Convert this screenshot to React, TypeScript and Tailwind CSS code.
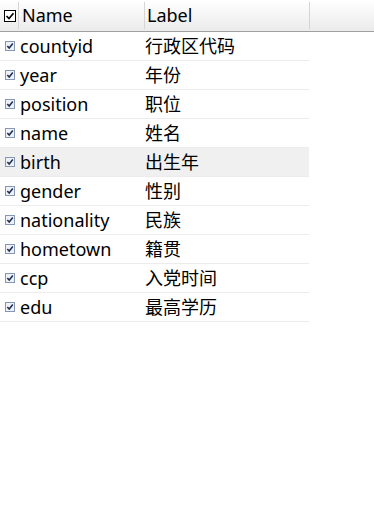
import React from 'react'

const rows: [string, string][] = [
  ['countyid', '行政区代码'],
  ['year', '年份'],
  ['position', '职位'],
  ['name', '姓名'],
  ['birth', '出生年'],
  ['gender', '性别'],
  ['nationality', '民族'],
  ['hometown', '籍贯'],
  ['ccp', '入党时间'],
  ['edu', '最高学历'],
]

function SmallCheck() {
  return (
    <svg width="10" height="10" viewBox="0 0 10 10" className="shrink-0">
      <rect x="0.5" y="0.5" width="9" height="9" fill="#eef2f8" stroke="#8597b3" />
      <path d="M2.3 5 L4.2 7 L7.8 2.6" fill="none" stroke="#1f2f55" strokeWidth="1.6" />
    </svg>
  )
}

function HeadCheck() {
  return (
    <svg width="12" height="12" viewBox="0 0 12 12" className="shrink-0">
      <rect x="0.5" y="0.5" width="11" height="11" fill="#fff" stroke="#000" />
      <path d="M2.5 6 L5 8.5 L9.5 3.2" fill="none" stroke="#000" strokeWidth="1.7" />
    </svg>
  )
}

export default function App() {
  return (
    <div
      className="w-[374px] h-[532px] bg-white text-black text-[18px] overflow-hidden"
      style={{ fontFamily: '"Noto Sans", "Noto Sans CJK SC", sans-serif' }}
    >
      {/* header */}
      <div className="flex h-[32px] border-b border-[#a0a0a0] bg-gradient-to-b from-white to-[#ebebeb]">
        <div className="flex w-[18px] items-center justify-center pl-[2px]">
          <HeadCheck />
        </div>
        <div className="w-[126px] flex items-center pl-[3px] border-l border-[#d5d5d5] my-[2px]">Name</div>
        <div className="w-[165px] flex items-center pl-[2px] border-l border-[#d5d5d5] my-[2px]">Label</div>
        <div className="flex-1 border-l border-[#d5d5d5] my-[2px]" />
      </div>

      {/* rows */}
      <div className="w-[309px]">
        {rows.map(([name, label]) => (
          <div
            key={name}
            className={
              'flex h-[29px] items-center border-b border-[#ececec] ' +
              (name === 'birth' ? 'bg-[#f0f0f0]' : '')
            }
          >
            <div className="w-[18px] flex items-center justify-center pl-[1px]">
              <SmallCheck />
            </div>
            <div className="w-[126px] pl-[2px] leading-none -mt-[1px]">{name}</div>
            <div className="flex-1 pl-[1px] leading-none -mt-[1px]">{label}</div>
          </div>
        ))}
      </div>
    </div>
  )
}
